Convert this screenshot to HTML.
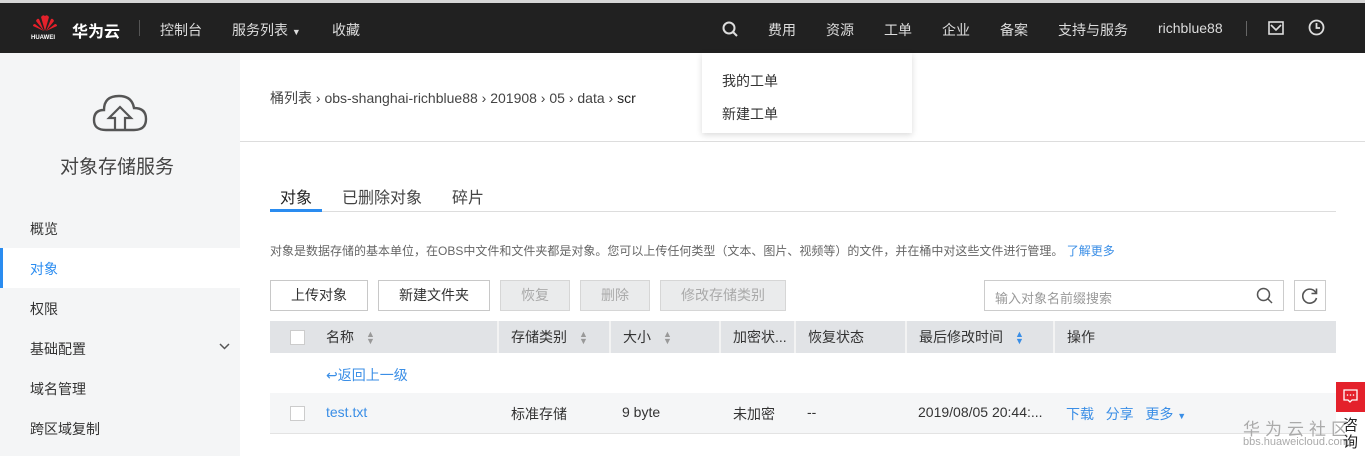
<!DOCTYPE html>
<html><head><meta charset="utf-8"><style>
*{margin:0;padding:0;box-sizing:border-box}
body{width:1365px;height:456px;overflow:hidden;position:relative;background:#fff;font-family:"Liberation Sans","Noto Sans CJK SC",sans-serif;font-size:14px;color:#333}
.a{position:absolute;white-space:nowrap}
.top{position:absolute;left:0;top:0;width:1365px;height:53px;background:#212121;border-top:3px solid #d6d6d6}
.nav{color:#ddd;font-size:14px;top:20px}
.side{position:absolute;left:0;top:53px;width:240px;height:403px;background:#f4f5f6}
.si{left:30px;font-size:14px;color:#333}
.btn{position:absolute;top:280px;height:31px;border:1px solid #c8c8c8;background:#fff;font-size:14px;text-align:center;line-height:29px;color:#333}
.dis{background:#eaebec;color:#aaa;border-color:#d6d6d6}
.th{position:absolute;top:321px;height:32px;background:#e1e3e6;line-height:32px;font-size:14px;border-right:2px solid #f3f3f3;padding-left:12px}
.sort{display:inline-block;margin-left:12px;font-size:9px;color:#999;vertical-align:middle;line-height:7px}
.cb{position:absolute;width:15px;height:15px;border:1px solid #ccc;background:#fff}
.blue{color:#3a8ee6}
</style></head><body>
<div class="top"></div>
<svg class="a" style="left:32px;top:13px" width="26" height="20" viewBox="0 0 26 20"><g fill="#e4212b"><path d="M13 18 L9 4 Q11 1 13 3Z"/><path d="M13 18 L17 4 Q15 1 13 3Z"/><path d="M12 18 L4 8 Q5 5 7 6Z"/><path d="M14 18 L22 8 Q21 5 19 6Z"/><path d="M12 18 L1 13 Q1 11 3 11Z"/><path d="M14 18 L25 13 Q25 11 23 11Z"/></g></svg>
<div class="a" style="left:31px;top:35px;color:#fff;font-size:6px;font-weight:bold">HUAWEI</div>
<div class="a" style="left:72px;top:18px;color:#fff;font-size:16px;font-weight:bold">华为云</div>
<div class="a" style="left:139px;top:20px;width:1px;height:16px;background:#555"></div>
<div class="a nav" style="left:160px">控制台</div>
<div class="a nav" style="left:232px">服务列表 <span style="font-size:9px">▼</span></div>
<div class="a nav" style="left:332px">收藏</div>
<svg class="a" style="left:722px;top:21px" width="17" height="17" viewBox="0 0 17 17"><circle cx="7" cy="7" r="5.5" fill="none" stroke="#ddd" stroke-width="2"/><path d="M11 11 L15 15" stroke="#ddd" stroke-width="2"/></svg>
<div class="a nav" style="left:768px">费用</div>
<div class="a nav" style="left:826px">资源</div>
<div class="a nav" style="left:884px">工单</div>
<div class="a nav" style="left:942px">企业</div>
<div class="a nav" style="left:1000px">备案</div>
<div class="a nav" style="left:1058px">支持与服务</div>
<div class="a nav" style="left:1158px">richblue88</div>
<div class="a" style="left:1246px;top:21px;width:1px;height:15px;background:#666"></div>
<svg class="a" style="left:1268px;top:21px" width="16" height="14" viewBox="0 0 16 14"><rect x="1" y="1" width="14" height="12" fill="none" stroke="#ddd" stroke-width="1.6"/><path d="M3 4 L8 9 L13 4" fill="none" stroke="#ddd" stroke-width="1.6"/></svg>
<svg class="a" style="left:1308px;top:19px" width="17" height="17" viewBox="0 0 17 17"><circle cx="8.5" cy="8.5" r="7" fill="none" stroke="#ddd" stroke-width="1.8"/><path d="M8.5 4 V9 H12" fill="none" stroke="#ddd" stroke-width="1.8"/></svg>

<div class="side"></div>
<svg class="a" style="left:92px;top:92px" width="56" height="42" viewBox="0 0 56 42"><path d="M14 38 Q2 38 2 28 Q2 18 12 18 Q12 4 27 4 Q40 4 42 16 Q54 16 54 27 Q54 38 42 38 Z" fill="none" stroke="#555" stroke-width="2.4"/><path d="M23 38 V26 H17 L28 15 L39 26 H33 V38" fill="none" stroke="#555" stroke-width="2.2"/></svg>
<div class="a" style="left:60px;top:152px;font-size:19px;color:#444">对象存储服务</div>
<div class="a si" style="top:219px">概览</div>
<div class="a" style="left:0;top:248px;width:240px;height:40px;background:#fff;border-left:3px solid #2a8cf0"></div>
<div class="a si" style="top:259px;color:#2a8cf0">对象</div>
<div class="a si" style="top:299px">权限</div>
<div class="a si" style="top:339px">基础配置</div>
<svg class="a" style="left:219px;top:343px" width="11" height="7" viewBox="0 0 11 7"><path d="M1 1 L5.5 5.5 L10 1" fill="none" stroke="#555" stroke-width="1.5"/></svg>
<div class="a si" style="top:379px">域名管理</div>
<div class="a si" style="top:419px">跨区域复制</div>

<div class="a" style="left:270px;top:88px;font-size:14px;color:#444">桶列表 › obs-shanghai-richblue88 › 201908 › 05 › data › <b style="color:#222;font-weight:normal">scr</b></div>
<div class="a" style="left:240px;top:141px;width:1125px;height:1px;background:#ddd"></div>
<div class="a" style="left:702px;top:53px;width:210px;height:80px;background:#fff;box-shadow:0 2px 6px rgba(0,0,0,.15)"></div>
<div class="a" style="left:849px;top:48px;width:0;height:0;border:5px solid transparent;border-bottom-color:#fff"></div>
<div class="a" style="left:722px;top:71px;font-size:14px">我的工单</div>
<div class="a" style="left:722px;top:104px;font-size:14px">新建工单</div>

<div class="a" style="left:280px;top:184px;font-size:16px;color:#222">对象</div>
<div class="a" style="left:342px;top:184px;font-size:16px;color:#444">已删除对象</div>
<div class="a" style="left:452px;top:184px;font-size:16px;color:#444">碎片</div>
<div class="a" style="left:270px;top:211px;width:1066px;height:1px;background:#ddd"></div>
<div class="a" style="left:270px;top:209px;width:52px;height:3px;background:#2a8cf0"></div>
<div class="a" style="left:270px;top:242px;font-size:12px;color:#666">对象是数据存储的基本单位，在OBS中文件和文件夹都是对象。您可以上传任何类型（文本、图片、视频等）的文件，并在桶中对这些文件进行管理。 <span class="blue">了解更多</span></div>

<div class="btn" style="left:270px;width:98px">上传对象</div>
<div class="btn" style="left:378px;width:112px">新建文件夹</div>
<div class="btn dis" style="left:500px;width:70px">恢复</div>
<div class="btn dis" style="left:580px;width:70px">删除</div>
<div class="btn dis" style="left:660px;width:126px">修改存储类别</div>
<div class="a" style="left:984px;top:280px;width:300px;height:31px;border:1px solid #ccc"></div>
<div class="a" style="left:995px;top:288px;font-size:13px;color:#999">输入对象名前缀搜索</div>
<svg class="a" style="left:1256px;top:287px" width="18" height="18" viewBox="0 0 18 18"><circle cx="7.5" cy="7.5" r="6" fill="none" stroke="#555" stroke-width="1.5"/><path d="M12 12 L16 16" stroke="#555" stroke-width="1.5"/></svg>
<div class="a" style="left:1294px;top:280px;width:32px;height:31px;border:1px solid #ccc"></div>
<svg class="a" style="left:1301px;top:287px" width="18" height="18" viewBox="0 0 18 18"><path d="M15 6 A7 7 0 1 0 15.5 11" fill="none" stroke="#555" stroke-width="1.6"/><path d="M15.5 1.5 V6.5 H10.5" fill="none" stroke="#555" stroke-width="1.6"/></svg>

<div class="th" style="left:270px;width:44px;border-right:none"></div>
<div class="cb" style="left:290px;top:330px"></div>
<div class="th" style="left:314px;width:185px">名称<span class="sort">▲<br>▼</span></div>
<div class="th" style="left:499px;width:112px">存储类别<span class="sort">▲<br>▼</span></div>
<div class="th" style="left:611px;width:110px">大小<span class="sort">▲<br>▼</span></div>
<div class="th" style="left:721px;width:75px">加密状...</div>
<div class="th" style="left:796px;width:111px">恢复状态</div>
<div class="th" style="left:907px;width:148px">最后修改时间<span class="sort" style="color:#3a8ee6">▲<br>▼</span></div>
<div class="th" style="left:1055px;width:281px;border-right:none">操作</div>

<div class="a blue" style="left:326px;top:365px;font-size:14px">↩返回上一级</div>
<div class="a" style="left:270px;top:393px;width:1066px;height:41px;background:#f5f6f7;border-bottom:1px solid #e3e3e3"></div>
<div class="cb" style="left:290px;top:406px"></div>
<div class="a blue" style="left:326px;top:404px">test.txt</div>
<div class="a" style="left:511px;top:404px">标准存储</div>
<div class="a" style="left:622px;top:404px">9 byte</div>
<div class="a" style="left:733px;top:404px">未加密</div>
<div class="a" style="left:807px;top:404px">--</div>
<div class="a" style="left:918px;top:404px">2019/08/05 20:44:...</div>
<div class="a blue" style="left:1066px;top:404px">下载&nbsp;&nbsp;&nbsp;分享&nbsp;&nbsp;&nbsp;更多 <span style="font-size:9px">▼</span></div>

<div class="a" style="left:1336px;top:382px;width:29px;height:30px;background:#e4212b"></div>
<svg class="a" style="left:1343px;top:389px" width="15" height="15" viewBox="0 0 15 15"><path d="M1 1 H14 V11 H9 L7 13 L5 11 H1 Z" fill="none" stroke="#fff" stroke-width="1.3"/><circle cx="4.5" cy="6" r=".8" fill="#fff"/><circle cx="7.5" cy="6" r=".8" fill="#fff"/><circle cx="10.5" cy="6" r=".8" fill="#fff"/></svg>
<div class="a" style="left:1243px;top:415px;font-size:17px;color:#aaa;letter-spacing:5px">华为云社区</div>
<div class="a" style="left:1243px;top:436px;font-size:11px;color:#aaa">bbs.huaweicloud.com</div>
<div class="a" style="left:1343px;top:417px;font-size:15px;line-height:17px;color:#222;white-space:normal;width:16px">咨询</div>
</body></html>
